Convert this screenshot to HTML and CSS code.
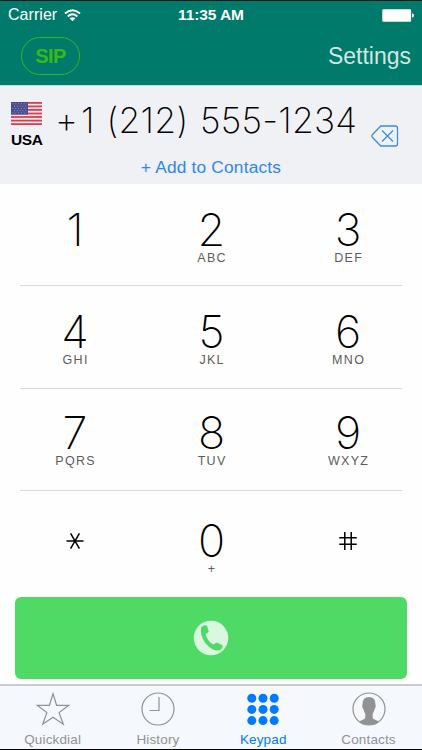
FILE: index.html
```html
<!DOCTYPE html>
<html lang="en">
<head>
<meta charset="utf-8">
<title>Keypad</title>
<link rel="stylesheet" href="styles.css">
</head>
<body>
<div class="phone">
  <header class="top">
    <div class="status">
      <div class="carrier"><span>Carrier</span>
        <svg width="17" height="13" viewBox="0 0 17 13"><g fill="none" stroke="#fff" stroke-width="2"><path d="M1 4.600Q8.500-2.200 16 4.600"/><path d="M3.700 7.400Q8.500 3.100 13.300 7.400"/></g><path d="M5.600 9.300Q8.500 7 11.400 9.300L8.500 12.200Z" fill="#fff"/></svg>
      </div>
      <span class="time">11:35 AM</span>
      <svg class="battery" width="32" height="13" viewBox="0 0 32 13"><rect x=".3" y=".3" width="28.800" height="12.400" rx="1.200" fill="#fff"/><path d="M30 4.300Q32 4.800 32 6.500T30 8.700Z" fill="#fff"/></svg>
    </div>
    <nav class="bar"><span class="sip">SIP</span><span class="settings">Settings</span></nav>
  </header>
  <section class="entry">
    <div class="country">
      <svg width="31" height="23" viewBox="0 0 31 23"><rect width="31" height="23" fill="#f4e8ed"/><g fill="#dc3c50"><rect width="31" height="1.800"/><rect y="3.500" width="31" height="1.800"/><rect y="7" width="31" height="1.800"/><rect y="10.600" width="31" height="1.800"/><rect y="14.100" width="31" height="1.800"/><rect y="17.700" width="31" height="1.800"/><rect y="21.200" width="31" height="1.800"/></g><rect width="17" height="12.600" fill="#494b8c"/><g stroke="#9a9bc4" stroke-width="1" stroke-dasharray="1 1.800"><path d="M1.500 1.800H16M3 4.100H16M1.500 6.400H16M3 8.700H16M1.500 11H16"/></g></svg>
      <b>USA</b>
    </div>
    <div class="number"><span class="plus">+</span>1 (212) 555-1234</div>
    <svg class="erase" width="28" height="22" viewBox="0 0 28 22" fill="none" stroke="#3a8eea" stroke-width="1.300"><path d="M9.800 1H24.500Q26.500 1 26.500 3V19Q26.500 21 24.500 21H9.800L1.300 12.300Q.4 11 1.300 9.700Z"/><path d="M11 5.500 22 16.500M22 5.500 11 16.500"/></svg>
    <div class="add">+ Add to Contacts</div>
  </section>
  <main class="pad">
    <div class="row"><div class="key"><b>1</b></div><div class="key"><b>2</b><small>ABC</small></div><div class="key"><b>3</b><small>DEF</small></div></div>
    <div class="row r2"><div class="key"><b>4</b><small>GHI</small></div><div class="key"><b>5</b><small>JKL</small></div><div class="key"><b>6</b><small>MNO</small></div></div>
    <div class="row r3"><div class="key"><b>7</b><small>PQRS</small></div><div class="key"><b>8</b><small>TUV</small></div><div class="key"><b>9</b><small>WXYZ</small></div></div>
    <div class="row last">
      <div class="key sign"><svg width="18" height="18" viewBox="0 0 18 18" stroke="#000" stroke-width="1.500"><path d="M.5 9H17.500M4.600 1.300 13.400 16.700M13.400 1.300 4.600 16.700"/></svg></div>
      <div class="key"><b>0</b><small>+</small></div>
      <div class="key sign"><svg width="18" height="18" viewBox="0 0 18 18" stroke="#000" stroke-width="1.500"><path d="M5.800 0V18M12.200 0V18M.3 5.700H17.700M.3 12.300H17.700"/></svg></div>
    </div>
  </main>
  <div class="call">
    <svg width="36" height="36" viewBox="0 0 36 36"><circle cx="18" cy="18" r="17.300" fill="#daf7df"/><path d="M8.200 7.200Q10.800 4.600 14 5.500L15.700 11.400Q15 13 12.800 13.700C13 18 16.500 22.800 20.700 24.500Q22.600 22.300 24.500 22.800L29.900 25.700Q29.200 29.500 26 30.400C18 32.200 5.500 18.500 8.200 7.200Z" fill="#4fda65"/></svg>
  </div>
  <footer class="tabs">
    <div class="tab"><svg width="34" height="34" viewBox="0 0 34 34" fill="none" stroke="#929292" stroke-width="1.200"><path d="M17 1.800 20.600 13.300H32.700L23.100 20.600 27.300 32.300 17 25.300 6.700 32.300 10.900 20.600 1.300 13.300H13.400Z"/></svg><span>Quickdial</span></div>
    <div class="tab"><svg width="34" height="34" viewBox="0 0 34 34" fill="none" stroke="#929292" stroke-width="1.200"><circle cx="17" cy="17" r="16"/><path d="M18 5V18.500H8.500"/></svg><span>History</span></div>
    <div class="tab on"><svg width="34" height="34" viewBox="0 0 34 34" fill="#007aff"><circle cx="5.800" cy="6.200" r="4.500"/><circle cx="17" cy="6.200" r="4.500"/><circle cx="28.200" cy="6.200" r="4.500"/><circle cx="5.800" cy="17.400" r="4.500"/><circle cx="17" cy="17.400" r="4.500"/><circle cx="28.200" cy="17.400" r="4.500"/><circle cx="5.800" cy="28.600" r="4.500"/><circle cx="17" cy="28.600" r="4.500"/><circle cx="28.200" cy="28.600" r="4.500"/></svg><span>Keypad</span></div>
    <div class="tab"><svg width="34" height="34" viewBox="0 0 34 34"><path d="M17 5C12.500 5 10.300 8 10.700 12.500C9.800 12.500 10.300 16.500 11.400 17C11.900 19 12.500 20.500 13.300 21.500V25.500C12.900 27.500 10 27.700 7 29.600C12 34 22 34 27 29.600C24 27.700 21.100 27.500 20.700 25.500V21.500C21.500 20.500 22.100 19 22.600 17C23.700 16.500 24.200 12.500 23.300 12.500C23.700 8 21.500 5 17 5Z" fill="#929292"/><circle cx="17" cy="17" r="16" fill="none" stroke="#929292" stroke-width="1.200"/></svg><span>Contacts</span></div>
  </footer>
</div>
</body>
</html>
```
FILE: styles.css
```css
* { box-sizing: border-box; }
body { margin: 0; background: #fefefe; font-family: "Liberation Sans", Arial, sans-serif; }
svg { display: block; flex: none; overflow: visible; }
.phone { width: 422px; height: 750px; display: flex; flex-direction: column; border-top: 1px solid #101c1a; border-bottom: 1px solid #050505; overflow: hidden; white-space: nowrap; }
.top { height: 85px; background: #007a6a; color: #fff; border-bottom: 1px solid #a5e6e2; flex: none; }
.status { height: 28px; display: grid; grid-template-columns: 1fr auto 1fr; align-items: center; padding: 0 8px; font-size: 16px; }
.carrier { display: flex; align-items: center; gap: 7px; letter-spacing: .05px; }
.time { font-weight: 700; font-size: 15.500px; letter-spacing: -.1px; }
.battery { justify-self: end; }
.bar { display: flex; justify-content: space-between; align-items: center; padding: 8px 11px 0 21px; }
.sip { width: 59px; height: 38px; border: 1.500px solid #39b617; border-radius: 19px; color: #38b916; font-weight: 700; font-size: 20px; letter-spacing: -.6px; text-align: center; line-height: 36px; }
.settings { color: #d1e7e3; font-size: 23px; letter-spacing: 0; }
.entry { height: 98px; flex: none; background: #f0f1f5; display: grid; grid-template-columns: 48px 315px 1fr; grid-template-rows: 66px 32px; }
.country { padding: 16px 0 0 11px; font-size: 15.500px; line-height: 18px; }
.country b { display: block; margin-top: 6px; letter-spacing: -.4px; }
.number { font-family: Inter, sans-serif; font-weight: 160; font-size: 35.500px; line-height: 44px; padding: 13px 0 0 7px; letter-spacing: .2px; word-spacing: 1.500px; }
.plus { margin-right: 3px; }
.erase { margin: 39px 0 0 8px; }
.add { grid-column: 1 / 4; text-align: center; color: #2f86ee; font-size: 17.300px; line-height: 30px; letter-spacing: .2px; }
.pad { height: 413px; flex: none; padding: 0 20px; }
.row { height: 102.500px; display: grid; grid-template-columns: 110px 163px 110px; border-bottom: 1px solid #dadadc; }
.row:first-child { height: 102px; }
.row.last { height: 105px; border: 0; }
.key { display: flex; flex-direction: column; align-items: center; padding-top: 25px; }
.r2 .key { padding-top: 25px; }
.r3 .key { padding-top: 23px; }
.last .key { padding-top: 29px; }
.key b { font-family: Inter, sans-serif; font-weight: 160; font-size: 45px; line-height: 42px; height: 42px; color: #000; }
.key small { font-size: 12.500px; line-height: 14px; letter-spacing: 1.300px; margin-right: -1.300px; color: #5c5c5c; }
.last .key.sign { padding-top: 41px; }
.call { height: 82px; margin: 0 15px; flex: none; background: #4fda65; border-radius: 6px; display: flex; align-items: center; justify-content: center; }
.tabs { height: 65px; margin-top: 5px; flex: none; background: #f5f8fd; border-top: 2px solid #c9cbd1; display: grid; grid-template-columns: repeat(4, 105.300px); }
.tab { display: flex; flex-direction: column; align-items: center; padding-top: 6px; color: #929292; font-size: 13.500px; line-height: 16px; letter-spacing: .15px; gap: 6px; }
.tab.on { color: #007aff; }
```
